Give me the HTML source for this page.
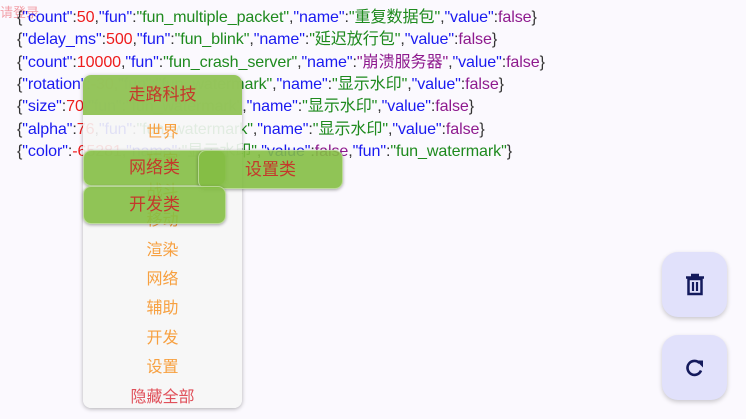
<html><head><style>
body{margin:0;width:746px;height:419px;background:#fbf9fe;position:relative;overflow:hidden;font-family:"Liberation Sans","Noto Sans CJK SC",sans-serif}
.l{position:absolute;left:17px;font-size:16.1px;color:#333;white-space:nowrap;letter-spacing:-0.1px}
.k{color:#1a1af0}.s{color:#1e8a1e}.n{color:#ee1c1c}.f{color:#8e1a8e}
.login{position:absolute;left:0;top:2px;font-size:13px;color:#f2a0a8}
.panel{position:absolute;left:83px;top:75px;width:159px;height:333px;background:rgba(246,246,246,0.9);border-radius:8px;box-shadow:0 1px 4px rgba(0,0,0,.3);overflow:hidden}
.hd{height:40px;background:rgba(141,193,80,0.93);color:#c4392b;font-size:17px;text-align:center;line-height:40px}
.it{position:absolute;left:0;width:159px;text-align:center;font-size:16px;color:#f7a040;transform:translateY(-50%)}
.btn{position:absolute;background:rgba(132,190,68,0.9);border-radius:8px;color:#c4392b;font-size:17px;text-align:center;box-shadow:0 1px 3px rgba(0,0,0,.35);border:1px solid rgba(255,255,255,.4)}
.fab{position:absolute;left:662px;width:65px;height:65px;border-radius:16px;background:#e1e1fb;box-shadow:0 2px 5px rgba(0,0,0,.2);display:flex;align-items:center;justify-content:center}
</style></head><body>
<div class="login">请登录</div>
<div class="l" style="top:3px">{<span class="k">"count"</span>:<span class="n">50</span>,<span class="k">"fun"</span>:<span class="s">"fun_multiple_packet"</span>,<span class="k">"name"</span>:<span class="s">"重复数据包"</span>,<span class="k">"value"</span>:<span class="f">false</span>}</div>
<div class="l" style="top:25px">{<span class="k">"delay_ms"</span>:<span class="n">500</span>,<span class="k">"fun"</span>:<span class="s">"fun_blink"</span>,<span class="k">"name"</span>:<span class="s">"延迟放行包"</span>,<span class="k">"value"</span>:<span class="f">false</span>}</div>
<div class="l" style="top:48px">{<span class="k">"count"</span>:<span class="n">10000</span>,<span class="k">"fun"</span>:<span class="s">"fun_crash_server"</span>,<span class="k">"name"</span>:<span class="f">"崩溃服务器"</span>,<span class="k">"value"</span>:<span class="f">false</span>}</div>
<div class="l" style="top:70px">{<span class="k">"rotation"</span>:<span class="n">-30</span>,<span class="k">"fun"</span>:<span class="s">"fun_watermark"</span>,<span class="k">"name"</span>:<span class="s">"显示水印"</span>,<span class="k">"value"</span>:<span class="f">false</span>}</div>
<div class="l" style="top:92px">{<span class="k">"size"</span>:<span class="n">70</span>,<span class="k">"fun"</span>:<span class="s">"fun_watermark"</span>,<span class="k">"name"</span>:<span class="s">"显示水印"</span>,<span class="k">"value"</span>:<span class="f">false</span>}</div>
<div class="l" style="top:115px">{<span class="k">"alpha"</span>:<span class="n">76</span>,<span class="k">"fun"</span>:<span class="s">"fun_watermark"</span>,<span class="k">"name"</span>:<span class="s">"显示水印"</span>,<span class="k">"value"</span>:<span class="f">false</span>}</div>
<div class="l" style="top:137px">{<span class="k">"color"</span>:<span class="n">-65281</span>,<span class="k">"name"</span>:<span class="s">"显示水印"</span>,<span class="k">"value"</span>:<span class="f">false</span>,<span class="k">"fun"</span>:<span class="s">"fun_watermark"</span>}</div>
<div class="panel">
<div class="hd">走路科技</div>
<div class="it" style="top:55px">世界</div>
<div class="it" style="top:84px">玩家</div>
<div class="it" style="top:114px">战斗</div>
<div class="it" style="top:143px">移动</div>
<div class="it" style="top:173px">渲染</div>
<div class="it" style="top:202px">网络</div>
<div class="it" style="top:231px">辅助</div>
<div class="it" style="top:261px">开发</div>
<div class="it" style="top:290px">设置</div>
<div class="it" style="top:320px;color:#e0505a">隐藏全部</div>
</div>
<div class="btn" style="left:83px;top:150px;width:141px;height:34px;line-height:34px">网络类</div>
<div class="btn" style="left:198px;top:150px;width:143px;height:37px;line-height:37px">设置类</div>
<div class="btn" style="left:83px;top:186px;width:141px;height:36px;line-height:36px">开发类</div>
<div class="fab" style="top:252px"><svg width="22" height="24" viewBox="0 0 22 24"><path d="M7 2h8M2 4.5h18" stroke="#141a5c" stroke-width="2.5" fill="none"/><path d="M4.5 6h13v15h-13z" stroke="#141a5c" stroke-width="2.5" fill="none"/><path d="M9 9v9M13 9v9" stroke="#141a5c" stroke-width="2.2"/></svg></div>
<div class="fab" style="top:335px"><svg width="22" height="22" viewBox="0 0 22 22"><path d="M17 13.5A7 7 0 1 1 15.5 6" stroke="#141a5c" stroke-width="2.6" fill="none"/><path d="M12 3.5h7v7z" fill="#141a5c"/></svg></div>
</body></html>
